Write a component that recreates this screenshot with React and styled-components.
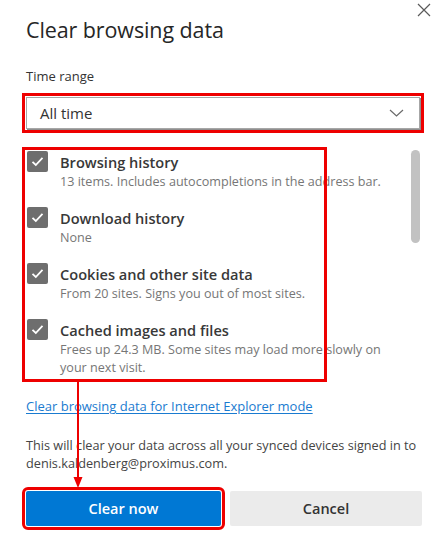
import React from 'react';
import styled, { createGlobalStyle } from 'styled-components';

const GlobalStyle = createGlobalStyle`
  body {
    margin: 0;
    background: #ffffff;
    font-family: "Open Sans", "Noto Sans", sans-serif;
    color: #333333;
  }
`;

const Dialog = styled.div`
  position: relative;
  width: 442px;
  height: 537px;
  box-sizing: border-box;
  padding: 3px 22px 0 26px;
  overflow: hidden;
`;

const Header = styled.div`
  display: flex;
  justify-content: space-between;
  align-items: flex-start;
`;

const Title = styled.h1`
  margin: 13px 0 0 0;
  font-size: 21.5px;
  line-height: 28px;
  font-weight: 500;
  color: #262626;
  letter-spacing: -0.1px;
`;

const CloseButton = styled.button`
  margin: 0 -11px 0 0;
  padding: 0;
  width: 14px;
  height: 14px;
  border: none;
  background: none;
  display: flex;
`;

const Label = styled.div`
  margin-top: 23px;
  font-size: 13px;
  line-height: 18px;
  color: #333333;
`;

const Select = styled.div`
  margin-top: 12px;
  height: 32px;
  box-sizing: border-box;
  display: flex;
  align-items: center;
  justify-content: space-between;
  padding: 0 15px 0 13px;
  border: 1px solid #a6a6a6;
  box-shadow: 1px 1px 0 #8f8f8f;
  outline: 3px solid #ee0000;
  outline-offset: 1px;
  font-size: 15px;
  color: #333333;
`;

const ListSection = styled.div`
  position: relative;
  margin-top: 18px;
`;

const ListWrap = styled.div`
  display: flex;
  height: 231px;
  overflow: hidden;
`;

const Items = styled.div`
  flex: 1;
  padding: 4px 0 0 1px;
`;

const Item = styled.div`
  display: grid;
  grid-template-columns: 21px 1fr;
  column-gap: 12px;
  margin-bottom: 16px;
`;

const Check = styled.span`
  width: 21px;
  height: 21px;
  border-radius: 2px;
  background: #6e6e6e;
  display: flex;
  align-items: center;
  justify-content: center;
`;

const ItemTitle = styled.div`
  font-size: 14.6px;
  line-height: 22px;
  font-weight: 600;
  color: #383838;
`;

const ItemDesc = styled.div`
  grid-column: 2;
  font-size: 12.6px;
  line-height: 18px;
  color: #767676;
  padding-right: 14px;
`;

const Scrollbar = styled.div`
  width: 9px;
  padding-top: 3px;
`;

const Thumb = styled.div`
  height: 93px;
  border-radius: 5px;
  background: #c2c2c2;
`;

const Annotation = styled.div`
  position: absolute;
  left: ${p => p.$left}px;
  top: ${p => p.$top}px;
  width: ${p => p.$width}px;
  height: ${p => p.$height}px;
  border: 3px solid #ee0000;
  box-sizing: border-box;
  pointer-events: none;
`;

const Arrow = styled.svg`
  position: absolute;
  left: 73px;
  top: 381px;
`;

const Link = styled.a`
  display: inline-block;
  margin-top: 18px;
  font-size: 13px;
  line-height: 20px;
  color: #1a7bd0;
  text-decoration: underline;
  text-underline-offset: 2px;
`;

const Note = styled.p`
  margin: 20px 0 0 0;
  font-size: 12.7px;
  line-height: 18px;
  color: #444444;
`;

const Buttons = styled.div`
  display: grid;
  grid-template-columns: 195px 192px;
  column-gap: 9px;
  margin-top: 19px;
`;

const Button = styled.button`
  height: 35px;
  border: none;
  border-radius: 2px;
  font-family: inherit;
  font-size: 14.5px;
  font-weight: 600;
  background: ${p => (p.$primary ? '#0078d4' : '#ebebeb')};
  color: ${p => (p.$primary ? '#ffffff' : '#333333')};
  outline: ${p => (p.$primary ? '3px solid #ee0000' : 'none')};
  outline-offset: 1px;
`;

const items = [
  { title: 'Browsing history', desc: '13 items. Includes autocompletions in the address bar.' },
  { title: 'Download history', desc: 'None' },
  { title: 'Cookies and other site data', desc: 'From 20 sites. Signs you out of most sites.' },
  { title: 'Cached images and files', desc: 'Frees up 24.3 MB. Some sites may load more slowly on your next visit.' },
];

const CheckMark = () => (
  <svg width="13" height="11" viewBox="0 0 13 11">
    <path d="M1.5 5.8 L4.8 9 L11.5 1.8" fill="none" stroke="#ffffff" strokeWidth="1.8" />
  </svg>
);

export default function App() {
  return (
    <>
      <GlobalStyle />
      <Dialog>
        <Header>
          <Title>Clear browsing data</Title>
          <CloseButton aria-label="Close">
            <svg width="14" height="14" viewBox="0 0 14 14">
              <path d="M1 1 L13 13 M13 1 L1 13" stroke="#5a5a5a" strokeWidth="1.2" />
            </svg>
          </CloseButton>
        </Header>
        <Label>Time range</Label>
        <Select>
          <span>All time</span>
          <svg width="15" height="8" viewBox="0 0 15 8">
            <path d="M1 1 L7.5 7 L14 1" fill="none" stroke="#6a6a6a" strokeWidth="1.2" />
          </svg>
        </Select>
        <ListSection>
          <ListWrap>
            <Items>
              {items.map(item => (
                <Item key={item.title}>
                  <Check><CheckMark /></Check>
                  <ItemTitle>{item.title}</ItemTitle>
                  <ItemDesc>{item.desc}</ItemDesc>
                </Item>
              ))}
            </Items>
            <Scrollbar><Thumb /></Scrollbar>
          </ListWrap>
          <Annotation $left={-4} $top={0} $width={305} $height={235} />
        </ListSection>
        <Link href="#">Clear browsing data for Internet Explorer mode</Link>
        <Note>
          This will clear your data across all your synced devices signed in to denis.kaldenberg@proximus.com.
        </Note>
        <Buttons>
          <Button $primary>Clear now</Button>
          <Button>Cancel</Button>
        </Buttons>
        <Arrow width="10" height="108" viewBox="0 0 10 108">
          <path d="M5 0 L5 98" stroke="#ee0000" strokeWidth="2" />
          <path d="M0.5 96 L9.5 96 L5 107 Z" fill="#ee0000" />
        </Arrow>
      </Dialog>
    </>
  );
}
